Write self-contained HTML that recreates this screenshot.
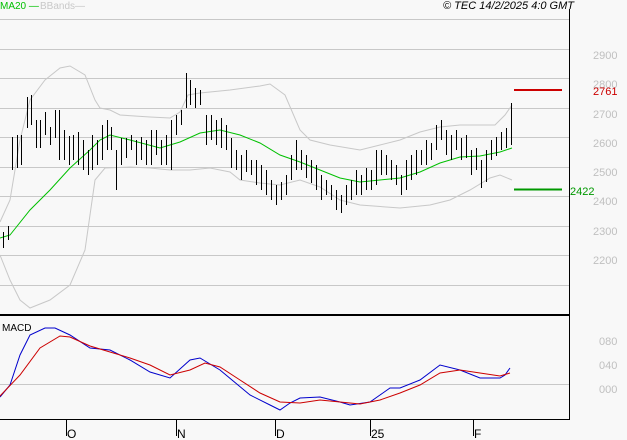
<!DOCTYPE html>
<html><head><meta charset="utf-8"><style>
body{margin:0;background:#f8f8f8;}
svg{display:block;font-family:"Liberation Sans",sans-serif;}
</style></head><body>
<svg width="627" height="440" viewBox="0 0 627 440" xmlns="http://www.w3.org/2000/svg">
<rect width="627" height="440" fill="#f8f8f8"/>
<g stroke="#c8c8c8" stroke-width="1">
<line x1="0" y1="19.5" x2="569" y2="19.5"/><line x1="0" y1="49.5" x2="569" y2="49.5"/>
<line x1="0" y1="78.5" x2="569" y2="78.5"/><line x1="0" y1="108.5" x2="569" y2="108.5"/>
<line x1="0" y1="137.5" x2="569" y2="137.5"/><line x1="0" y1="167.5" x2="569" y2="167.5"/>
<line x1="0" y1="196.5" x2="569" y2="196.5"/><line x1="0" y1="226.5" x2="569" y2="226.5"/>
<line x1="0" y1="255.5" x2="569" y2="255.5"/><line x1="0" y1="285.5" x2="569" y2="285.5"/>
<line x1="0" y1="384.5" x2="569" y2="384.5"/>
</g>
<line x1="0" y1="315" x2="569" y2="315" stroke="#000" stroke-width="2"/>
<line x1="569.5" y1="9" x2="569.5" y2="419" stroke="#000"/>
<line x1="0" y1="419.5" x2="570" y2="419.5" stroke="#000"/>
<g stroke="#000"><line x1="66.5" y1="419" x2="66.5" y2="436"/><line x1="176.5" y1="419" x2="176.5" y2="436"/><line x1="275.5" y1="419" x2="275.5" y2="436"/><line x1="370.5" y1="419" x2="370.5" y2="436"/><line x1="473.5" y1="419" x2="473.5" y2="436"/></g>
<g font-size="12" fill="#000"><text x="67" y="438">O</text><text x="177" y="438">N</text><text x="276" y="438">D</text><text x="371" y="438">25</text><text x="474" y="438">F</text></g>
<g font-size="11" fill="#c0c0c0"><text x="593" y="59">2900</text><text x="593" y="88">2800</text><text x="593" y="118">2700</text><text x="593" y="147">2600</text><text x="593" y="176">2500</text><text x="593" y="205">2400</text><text x="593" y="235">2300</text><text x="593" y="264">2200</text>
<text x="599" y="345">080</text><text x="599" y="369">040</text><text x="599" y="393">000</text></g>
<text x="0" y="9" font-size="10" fill="#00c000">MA20 —</text>
<text x="40" y="9" font-size="10" fill="#c8c8c8">BBands—</text>
<text x="574" y="9" font-size="11" font-style="italic" fill="#000" text-anchor="end">© TEC 14/2/2025 4:0 GMT</text>
<text x="2" y="331" font-size="10" fill="#000">MACD</text>
<polyline fill="none" stroke="#c8c8c8" points="0,222 10,200 20,140 30,100 45,80 60,68 70,66 85,75 95,100 100,108 110,110 120,115 150,117 170,118 180,112 188,95 200,93 230,90 260,86 270,84 285,95 300,130 310,140 330,145 360,150 380,145 400,140 420,132 440,127 460,125 480,125 495,125 505,115 512,105"/>
<polyline fill="none" stroke="#c8c8c8" points="0,255 10,280 20,300 30,308 50,300 70,285 85,250 95,180 105,168 130,167 150,168 170,170 190,170 210,168 230,172 240,180 260,183 280,185 300,180 320,187 340,200 360,205 400,208 430,205 450,200 470,190 490,178 500,175 512,180"/>
<polyline fill="none" stroke="#00c000" points="0,238 10,235 30,210 50,190 70,168 90,150 100,140 110,135 130,140 160,148 180,142 200,133 220,130 240,135 260,143 280,155 300,162 320,170 340,178 360,182 380,180 400,178 420,172 440,163 460,157 480,156 500,152 512,148"/>
<path stroke="#000" stroke-width="1" shape-rendering="crispEdges" fill="none" d="M3.5 232V248M8.5 226V240M12.5 137V170M17.5 135V168M21.5 135V165M27.5 97V128M31.5 95V125M36.5 120V148M40.5 120V148M45.5 112V135M50.5 127V145M55.5 110V138M59.5 110V160M64.5 130V160M69.5 136V165M73.5 135V160M78.5 132V165M83.5 140V170M88.5 150V175M92.5 135V170M97.5 140V165M102.5 125V160M107.5 120V150M111.5 127V150M116.5 150V190M121.5 138V165M126.5 138V158M131.5 135V150M136.5 140V165M141.5 137V160M146.5 140V165M151.5 130V165M156.5 130V155M161.5 140V165M166.5 135V165M171.5 120V170M176.5 115V135M181.5 110V125M186.5 73V108M190.5 80V105M195.5 88V108M200.5 90V105M206.5 115V145M211.5 115V140M216.5 120V145M221.5 118V148M226.5 125V150M231.5 138V168M236.5 150V170M241.5 155V180M246.5 150V172M251.5 160V175M256.5 160V185M261.5 165V190M266.5 170V195M271.5 180V200M276.5 185V205M281.5 182V200M286.5 175V195M291.5 155V180M296.5 140V170M301.5 150V170M306.5 155V178M311.5 160V183M316.5 165V190M321.5 175V200M326.5 180V195M331.5 185V200M336.5 190V210M341.5 195V213M346.5 185V205M351.5 180V200M356.5 170V195M361.5 175V195M366.5 168V190M371.5 170V190M376.5 150V185M381.5 150V175M386.5 155V175M391.5 160V180M396.5 165V185M401.5 175V195M406.5 160V190M411.5 155V180M416.5 150V175M421.5 150V165M426.5 140V165M431.5 143V160M436.5 125V150M441.5 120V140M446.5 130V155M451.5 135V160M456.5 130V150M461.5 138V160M466.5 135V158M471.5 150V175M476.5 148V170M481.5 160V188M486.5 150V182M491.5 140V160M496.5 137V156M501.5 132V150M506.5 128V148M511.5 103V145"/>
<line x1="514" y1="90" x2="562" y2="90" stroke="#cc0000" stroke-width="2"/>
<text x="593" y="95" font-size="11" fill="#cc0000">2761</text>
<line x1="514" y1="189.5" x2="562" y2="189.5" stroke="#009900" stroke-width="2"/>
<text x="570" y="195" font-size="11" fill="#009900">2422</text>
<polyline fill="none" stroke="#0000cc" points="0,397 10,385 20,355 30,335 45,328 55,328 70,335 90,348 110,350 130,360 150,372 170,378 190,360 200,358 220,370 250,395 270,405 280,410 290,403 300,398 320,397 340,402 350,405 370,402 380,395 390,388 400,388 420,380 440,365 460,370 480,378 500,378 505,375 510,368"/>
<polyline fill="none" stroke="#cc0000" points="0,396 20,375 40,348 60,336 70,337 90,346 110,352 130,358 150,365 170,375 190,370 205,363 220,367 240,380 260,393 280,402 300,403 320,400 340,402 360,404 380,400 400,393 420,385 440,373 460,370 480,373 500,376 510,373"/>
</svg>
</body></html>
